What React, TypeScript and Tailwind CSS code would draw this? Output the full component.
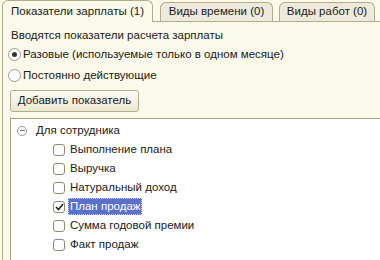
import { useState } from "react";

const ITEMS = [
  { name: "Выполнение плана", checked: false },
  { name: "Выручка", checked: false },
  { name: "Натуральный доход", checked: false },
  { name: "План продаж", checked: true },
  { name: "Сумма годовой премии", checked: false },
  { name: "Факт продаж", checked: false },
];

function Radio({ on }: { on: boolean }) {
  return (
    <span className="w-[13px] h-[13px] rounded-full border border-[#9c9a90] bg-white flex items-center justify-center shrink-0">
      {on && <span className="w-[5px] h-[5px] rounded-full bg-[#333]" />}
    </span>
  );
}

function Check({ on }: { on: boolean }) {
  return (
    <span className="w-[12px] h-[12px] rounded-[3px] border border-[#8f8a76] bg-white flex items-center justify-center shrink-0">
      {on && (
        <svg width="9" height="8" viewBox="0 0 9 8">
          <path d="M1 4 L3.5 6.5 L8 1" stroke="#222" strokeWidth="1.6" fill="none" />
        </svg>
      )}
    </span>
  );
}

export default function App() {
  const [mode, setMode] = useState(0);
  const [items, setItems] = useState(ITEMS);

  return (
    <div className="w-[380px] h-[260px] bg-[#fbf9ea] overflow-hidden flex flex-col text-[11.5px] text-[#1a1a1a]" style={{ fontFamily: '"Liberation Sans", Arial, sans-serif' }}>
      {/* Tabs */}
      <div className="flex items-end h-[22px] pl-[2px] shrink-0 whitespace-nowrap">
        <div className="w-[151px] h-[22px] border border-b-0 border-[#b3ac88] rounded-t-[6px] bg-[#fbf9ea] flex items-center justify-center pt-[1px]">
          Показатели зарплаты (1)
        </div>
        <div className="flex items-end h-[20px] border-b border-[#b3ac88] pl-[7px] flex-1">
          <div className="w-[113px] h-[19px] border border-b-0 border-[#b3ac88] rounded-t-[6px] bg-[#edeadb] flex items-center justify-center">
            Виды времени (0)
          </div>
          <div className="w-[96px] h-[19px] ml-[6px] border border-b-0 border-[#b3ac88] rounded-t-[6px] bg-[#edeadb] flex items-center justify-center">
            Виды работ (0)
          </div>
        </div>
      </div>

      {/* Panel */}
      <div className="flex-1 ml-[2px] border-l border-[#b3ac88] flex flex-col">
        <div className="pl-[8px] pt-[3px] h-[20px] leading-[20px]">Вводятся показатели расчета зарплаты</div>
        <div className="flex flex-col pl-[5px] mt-[2px]">
          <label className="flex items-center gap-[2px] h-[21px] cursor-pointer" onClick={() => setMode(0)}>
            <Radio on={mode === 0} />
            <span>Разовые (используемые только в одном месяце)</span>
          </label>
          <label className="flex items-center gap-[2px] h-[21px] cursor-pointer" onClick={() => setMode(1)}>
            <Radio on={mode === 1} />
            <span>Постоянно действующие</span>
          </label>
        </div>
        <div className="pl-[7px] mt-[4px]">
          <button className="h-[22px] w-[129px] rounded-[3px] border border-[#b3ac88] bg-gradient-to-b from-[#fdfcf5] to-[#ebe7d1] text-[11.5px]">
            Добавить показатель
          </button>
        </div>

        {/* Tree */}
        <div className="flex-1 ml-[7px] mt-[6px] border-l border-t border-[#aaa37c] bg-white pt-[2px]">
          <div className="flex items-center h-[19px] pl-[6px]">
            <span className="w-[10px] h-[10px] rounded-full border border-[#999] flex items-center justify-center">
              <span className="w-[5px] h-px bg-[#777]" />
            </span>
            <span className="ml-[9px]">Для сотрудника</span>
          </div>
          {items.map((it, i) => (
            <div key={it.name} className="flex items-center h-[19px] pl-[42px]">
              <span
                className="cursor-pointer"
                onClick={() => setItems(items.map((x, j) => (j === i ? { ...x, checked: !x.checked } : x)))}
              >
                <Check on={it.checked} />
              </span>
              <span
                className={
                  it.checked
                    ? "ml-[3px] px-[2px] bg-[#5b70cc] text-white outline-1 outline-dotted outline-[#c8d0ff] -outline-offset-1"
                    : "ml-[3px] px-[2px]"
                }
              >
                {it.name}
              </span>
            </div>
          ))}
        </div>
      </div>
    </div>
  );
}
